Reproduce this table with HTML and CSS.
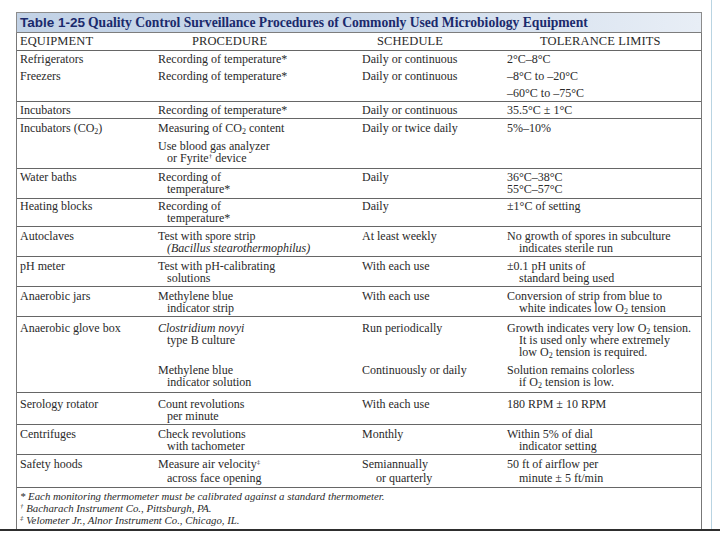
FILE: index.html
```html
<!DOCTYPE html>
<html>
<head>
<meta charset="utf-8">
<link rel="stylesheet" href="styles.css">
</head>
<body>
<div class="page">
  <div class="tbl">
    <div class="title"><span class="tnum">Table 1-25</span> <span class="ttxt">Quality Control Surveillance Procedures of Commonly Used Microbiology Equipment</span></div>

    <div class="row head">
      <div class="c1">EQUIPMENT</div>
      <div class="c2">PROCEDURE</div>
      <div class="c3">SCHEDULE</div>
      <div class="c4">TOLERANCE LIMITS</div>
    </div>

    <div class="row g1">
      <div class="c1"><div class="l17">Refrigerators</div><div class="l17">Freezers</div></div>
      <div class="c2"><div class="l17">Recording of temperature*</div><div class="l17">Recording of temperature*</div></div>
      <div class="c3"><div class="l17">Daily or continuous</div><div class="l17">Daily or continuous</div></div>
      <div class="c4"><div class="l17">2°C–8°C</div><div class="l17">–8°C to –20°C</div><div class="l16">–60°C to –75°C</div></div>
    </div>

    <div class="row g2">
      <div class="c1">Incubators</div>
      <div class="c2">Recording of temperature*</div>
      <div class="c3">Daily or continuous</div>
      <div class="c4">35.5°C ± 1°C</div>
    </div>

    <div class="row r-co2">
      <div class="c1">Incubators (CO<sub>2</sub>)</div>
      <div class="c2">
        <div class="blk">Measuring of CO<sub>2</sub> content</div>
        <div class="blk">Use blood gas analyzer<div class="ind">or Fyrite<sup>†</sup> device</div></div>
      </div>
      <div class="c3">Daily or twice daily</div>
      <div class="c4">5%–10%</div>
    </div>

    <div class="row r-water">
      <div class="c1">Water baths</div>
      <div class="c2">Recording of<div class="ind">temperature*</div></div>
      <div class="c3">Daily</div>
      <div class="c4">36°C–38°C<div>55°C–57°C</div></div>
    </div>

    <div class="row r-heat">
      <div class="c1">Heating blocks</div>
      <div class="c2">Recording of<div class="ind">temperature*</div></div>
      <div class="c3">Daily</div>
      <div class="c4">±1°C of setting</div>
    </div>

    <div class="row r-std">
      <div class="c1">Autoclaves</div>
      <div class="c2">Test with spore strip<div class="ind"><i>(Bacillus stearothermophilus)</i></div></div>
      <div class="c3">At least weekly</div>
      <div class="c4">No growth of spores in subculture<div class="ind">indicates sterile run</div></div>
    </div>

    <div class="row r-std">
      <div class="c1">pH meter</div>
      <div class="c2">Test with pH-calibrating<div class="ind">solutions</div></div>
      <div class="c3">With each use</div>
      <div class="c4">±0.1 pH units of<div class="ind">standard being used</div></div>
    </div>

    <div class="row r-std">
      <div class="c1">Anaerobic jars</div>
      <div class="c2">Methylene blue<div class="ind">indicator strip</div></div>
      <div class="c3">With each use</div>
      <div class="c4">Conversion of strip from blue to<div class="ind">white indicates low O<sub>2</sub> tension</div></div>
    </div>

    <div class="row r-glove">
      <div class="c1">Anaerobic glove box</div>
      <div class="c2">
        <div class="blk b3"><i>Clostridium novyi</i><div class="ind">type B culture</div></div>
        <div class="blk">Methylene blue<div class="ind">indicator solution</div></div>
      </div>
      <div class="c3">
        <div class="blk b3">Run periodically</div>
        <div class="blk">Continuously or daily</div>
      </div>
      <div class="c4">
        <div class="blk b3">Growth indicates very low O<sub>2</sub> tension.<div class="ind">It is used only where extremely</div><div class="ind">low O<sub>2</sub> tension is required.</div></div>
        <div class="blk">Solution remains colorless<div class="ind">if O<sub>2</sub> tension is low.</div></div>
      </div>
    </div>

    <div class="row r-sero">
      <div class="c1">Serology rotator</div>
      <div class="c2">Count revolutions<div class="ind">per minute</div></div>
      <div class="c3">With each use</div>
      <div class="c4">180 RPM ± 10 RPM</div>
    </div>

    <div class="row r-std">
      <div class="c1">Centrifuges</div>
      <div class="c2">Check revolutions<div class="ind">with tachometer</div></div>
      <div class="c3">Monthly</div>
      <div class="c4">Within 5% of dial<div class="ind">indicator setting</div></div>
    </div>

    <div class="row r-hood">
      <div class="c1">Safety hoods</div>
      <div class="c2">Measure air velocity<sup>‡</sup><div class="ind">across face opening</div></div>
      <div class="c3">Semiannually<div class="ind">or quarterly</div></div>
      <div class="c4">50 ft of airflow per<div class="ind">minute ± 5 ft/min</div></div>
    </div>

    <div class="foot">
      <div>* Each monitoring thermometer must be calibrated against a standard thermometer.</div>
      <div><sup>†</sup> Bacharach Instrument Co., Pittsburgh, PA.</div>
      <div><sup>‡</sup> Velometer Jr., Alnor Instrument Co., Chicago, IL.</div>
    </div>
  </div>
</div>
<div class="rule"></div>
</body>
</html>
```

FILE: styles.css
```css
html, body {
  margin: 0;
  padding: 0;
  background: #ffffff;
}

body {
  font-family: "Liberation Serif", "Times New Roman", serif;
  font-size: 12px;
  color: #2a2a2a;
  width: 720px;
  height: 540px;
  overflow: hidden;
}

.page {
  width: 712px;
  height: 529px;
  box-sizing: border-box;
  border-right: 1px solid #b9d4e2;
  padding-top: 12px;
  padding-left: 16px;
}

.tbl {
  width: 686px;
  box-sizing: border-box;
  border-left: 1px solid #777;
  border-right: 1px solid #777;
  height: 517px;
}

.title {
  height: 21px;
  box-sizing: border-box;
  border-top: 1px solid #8c8c8c;
  border-bottom: 1px solid #7d7d7d;
  margin: 0 -1px;
  border-left: 1px solid #8c8c8c;
  border-right: 1px solid #8c8c8c;
  background: linear-gradient(to right, #c2d2e6 0%, #cbd9ea 50%, #e8eef6 100%);
  padding-left: 3px;
  line-height: 19px;
  color: #1b2a6c;
  white-space: nowrap;
}

.tnum {
  font-family: "Liberation Sans", Arial, sans-serif;
  font-weight: bold;
  font-size: 13.5px;
}

.ttxt {
  font-family: "Liberation Serif", "Times New Roman", serif;
  font-weight: bold;
  font-size: 13.6px;
}

.row {
  display: grid;
  grid-template-columns: 141px 204px 145px 194px;
  border-bottom: 1px solid #666;
  line-height: 12px;
  white-space: nowrap;
}

.c1 { padding-left: 3px; }

.c2 .ind { padding-left: 9px; }
.c3 .ind { padding-left: 14px; }
.c4 .ind { padding-left: 12px; }

sub {
  font-size: 8px;
  vertical-align: -2px;
  line-height: 0;
}

sup {
  font-size: 7px;
  vertical-align: 4px;
  line-height: 0;
}

.head {
  line-height: 17px;
  font-size: 12.5px;
  letter-spacing: 0.1px;
}
.head .c2 { padding-left: 34px; }
.head .c3 { padding-left: 15px; }
.head .c4 { padding-left: 33px; }

.g1 { line-height: 17px; }
.g1 .l16 { line-height: 16px; }

.g2 { line-height: 16px; }

.r-co2 { padding: 3px 0 4px; }
.r-co2 .blk + .blk { margin-top: 6px; }

.r-water { padding: 2px 0 3px; }
.r-heat { padding: 1px 0 2px; }
.r-std { padding: 3px 0 2px; }

.r-glove { padding: 5px 0 4px; }
.r-glove .blk + .blk { margin-top: 6px; }
.r-glove .b3 { height: 36px; }

.r-sero { padding: 5px 0 2px; }

.r-hood { padding: 3px 0 3px; }
.r-hood .ind { margin-top: 2px; }

.foot {
  padding: 2px 0 3px 3px;
  font-style: italic;
  font-size: 10.8px;
  line-height: 12px;
  white-space: nowrap;
}

.rule {
  height: 2px;
  background: #2e2e2e;
  width: 720px;
}
```
